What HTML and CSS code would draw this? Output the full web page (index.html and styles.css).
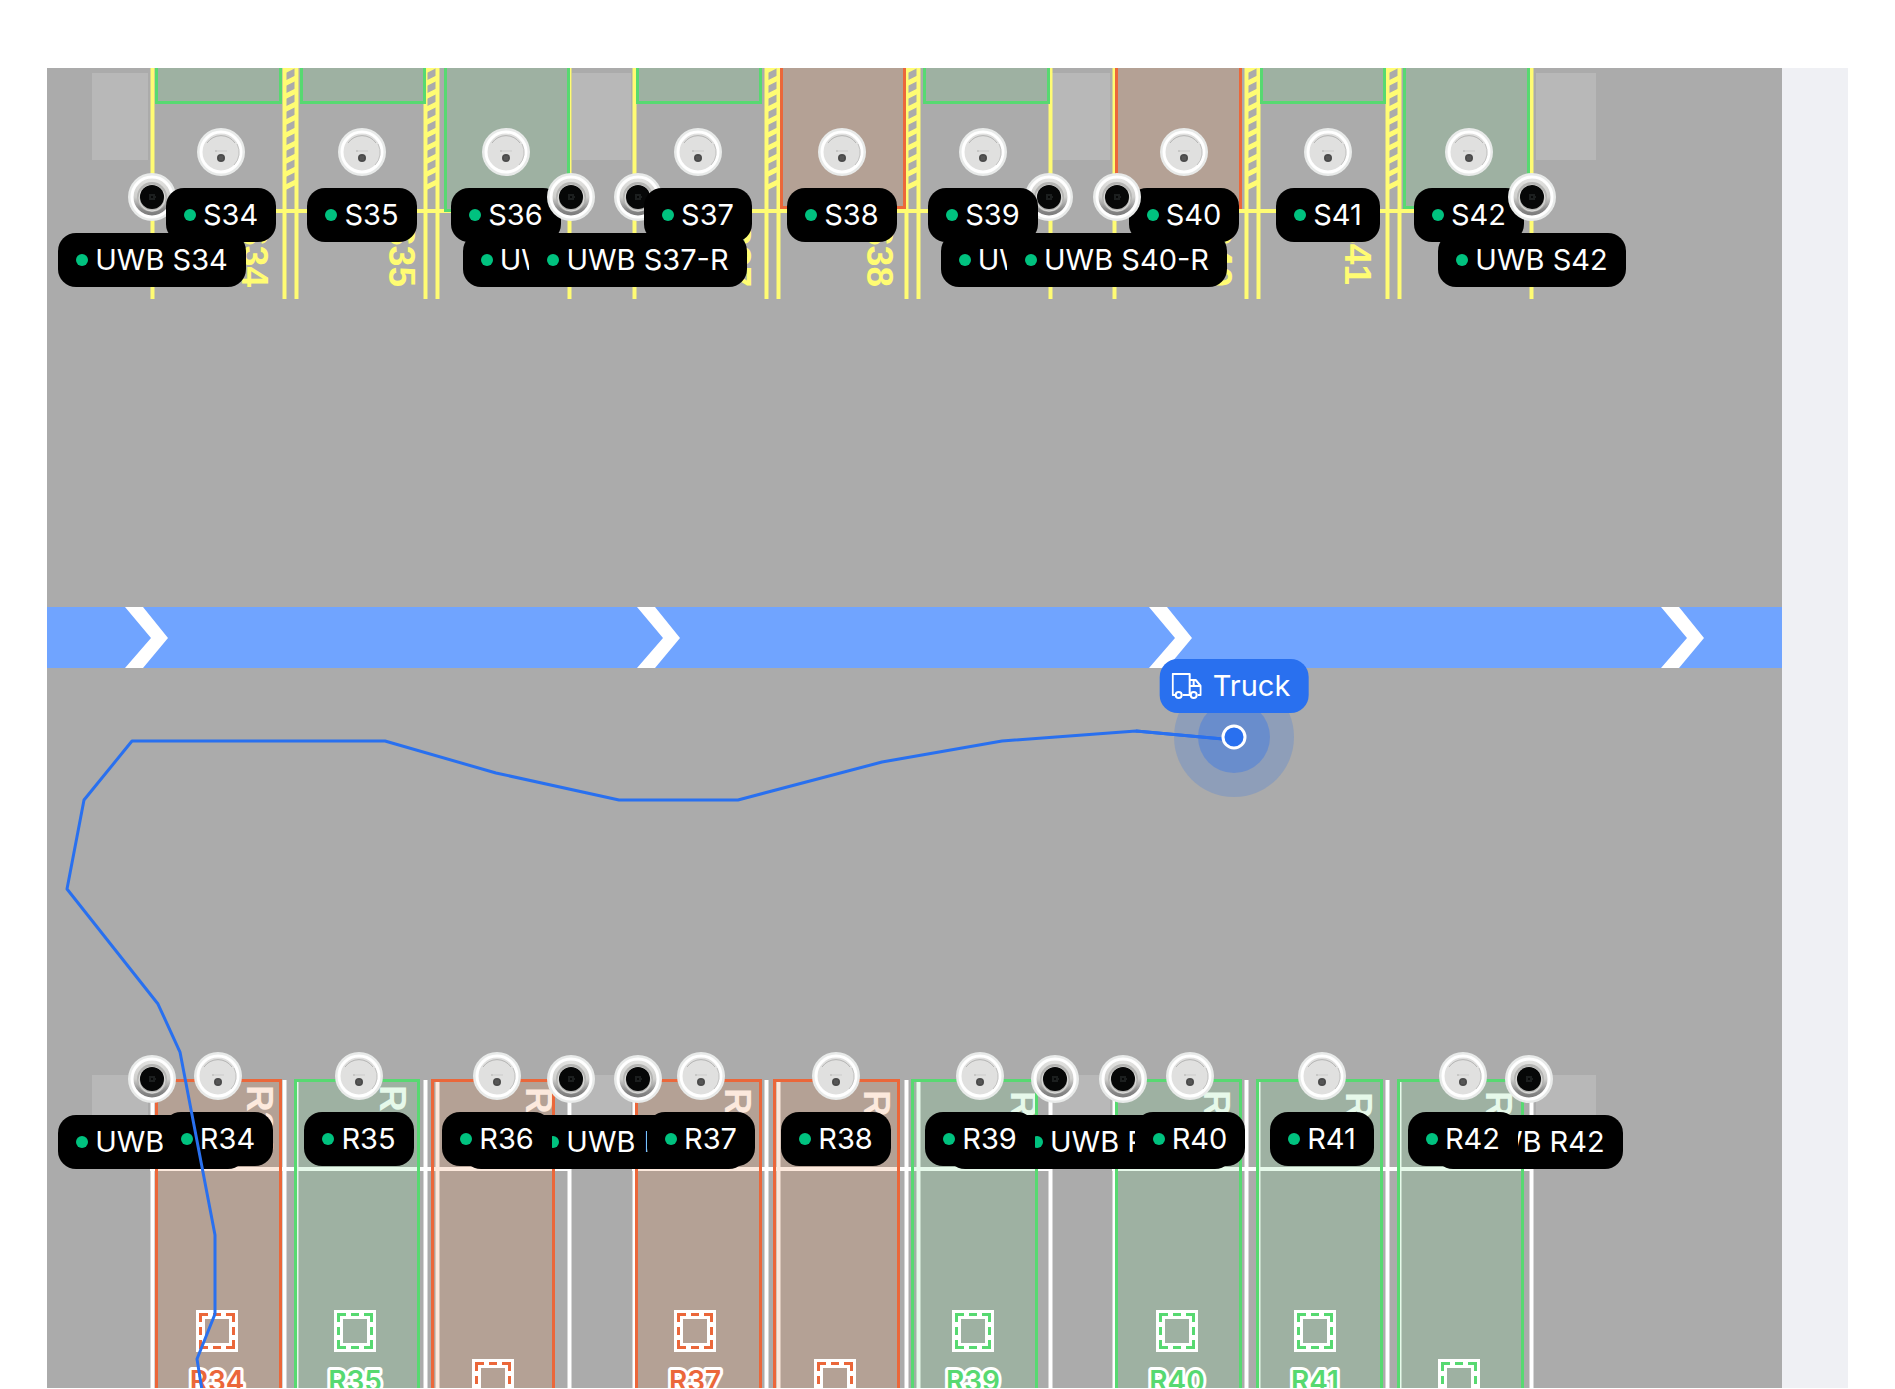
FILE: index.html
```html
<!DOCTYPE html>
<html lang="en">
<head>
    <meta charset="UTF-8">
    <meta name="viewport" content="width=device-width, initial-scale=1.0">
    <title>Yard Map</title>
    <link rel="stylesheet" href="styles.css">
</head>
<body>
    <!-- shared symbols -->
    <svg class="defs" aria-hidden="true">
        <symbol id="reader" viewBox="0 0 48 48">
            <circle cx="24" cy="24" r="24" fill="#e8eae9"/>
            <circle cx="24" cy="24" r="20" fill="#e0e0df" stroke="#fff" stroke-width="3"/>
            <path d="M10 15a17 17 0 0 1 28 0" fill="none" stroke="#b4b4b3" stroke-width="1"/>
            <path d="M40 16a18 18 0 0 1-3 21" fill="none" stroke="#c4c4c3" stroke-width="1"/>
            <path d="M18 23h12" stroke="#cbcbca" stroke-width="1"/>
            <circle cx="19" cy="23" r="1" fill="#c2c2c1"/>
            <circle cx="24" cy="30" r="4" fill="#4b4b4b"/>
            <path d="M22.500 29h1m1 0h1m-3 2h1m1 0h1" stroke="#777" stroke-width="1"/>
        </symbol>
        <linearGradient id="bezel" x1="0" y1="0" x2="0" y2="1">
            <stop offset="0" stop-color="#e4e4e2"/>
            <stop offset=".5" stop-color="#cfcfcd"/>
            <stop offset=".8" stop-color="#8a8a8a"/>
            <stop offset="1" stop-color="#777"/>
        </linearGradient>
        <symbol id="anchor" viewBox="0 0 48 48">
            <circle cx="24" cy="24" r="24" fill="#e8eae9"/>
            <circle cx="24" cy="24" r="20" fill="url(#bezel)" stroke="#fff" stroke-width="3"/>
            <circle cx="24" cy="24" r="15" fill="#b5b5b3"/>
            <circle cx="24" cy="25" r="13" fill="none" stroke="#dededc" stroke-width="1"/>
            <circle cx="24" cy="24" r="12" fill="#060707"/>
            <path d="M21 22h6m-6 2h2m2 0h3m-7 2h6" stroke="#333838" stroke-width="1"/>
        </symbol>
    </svg>

    <main class="map">
        <div class="floor">
            <svg class="plan" id="plan">
                <g id="planLayer" transform="translate(-47 -68)"></g>
            </svg>
            <div class="pins" id="pins"></div>
            <svg class="plan">
                <g transform="translate(-47 -68)">
                    <polyline class="track" points="202,1390 197,1359 215,1314 215,1235 180,1052 158,1004 67,889 84,800 132,741 385,741 496,773 619,800 738,800 882,762 1002,741 1136,731 1234,740"/>
                    <circle class="pulse-outer" cx="1234" cy="737" r="60"/>
                    <circle class="pulse-inner" cx="1234" cy="737" r="36"/>
                    <polyline class="track" points="1136,731 1234,740"/>
                    <circle class="position" cx="1234" cy="737" r="11"/>
                </g>
            </svg>
            <div class="truck" id="truck">
                <svg class="truck-icon" viewBox="0 0 30 26" aria-hidden="true">
                    <path d="M4 22H1V1h17v21h-7M18 7h6l5 6v9h-3M18 22h1M18 13h11M22 7v6"/>
                    <circle cx="7" cy="22" r="3"/>
                    <circle cx="22" cy="22" r="3"/>
                </svg>
                Truck
            </div>
        </div>
    </main>

    <script>
        // plan coordinates of the top left corner of the floor
        const ORIGIN = { x: 47, y: 68 };

        const laneLines = [152, 284, 296, 425, 437, 569, 634, 766, 778, 906, 918, 1050, 1114, 1246, 1258, 1387, 1399, 1531];
        const blocks = [[150, 571], [632, 1052], [1112, 1533]];
        const hatches = [284, 425, 766, 906, 1246, 1387];
        const pillars = [[92, 56], [572, 59], [1052, 58], [1536, 60]];

        // [name, left, right, bottom, state, painted text x, painted text end]
        const upperBays = [
            ["S34", 155, 282, 104, "free", 242, 287],
            ["S35", 300, 426, 104, "free", 389, 287],
            ["S36", 444, 570, 212, "free", 531, 287],
            ["S37", 636, 762, 104, "free", 725, 287],
            ["S38", 780, 906, 209, "busy", 867, 287],
            ["S39", 923, 1050, 104, "free", 1008, 287],
            ["S40", 1115, 1242, 209, "busy", 1206, 287],
            ["S41", 1260, 1386, 104, "free", 1345, 285],
            ["S42", 1403, 1530, 209, "free", 1490, 287]
        ];

        // [name, left, right, state, painted text x, painted text start, target x, target y]
        const lowerBays = [
            ["R34", 155, 282, "busy", 247, 1085, 217, 1331],
            ["R35", 294, 420, "free", 380, 1085, 355, 1331],
            ["R36", 431, 555, "busy", 526, 1087, 493, 1380],
            ["R37", 635, 762, "busy", 725, 1088, 695, 1331],
            ["R38", 773, 900, "busy", 864, 1090, 835, 1380],
            ["R39", 911, 1038, "free", 1011, 1091, 973, 1331],
            ["R40", 1115, 1242, "free", 1204, 1090, 1177, 1331],
            ["R41", 1256, 1383, "free", 1346, 1092, 1315, 1331],
            ["R42", 1397, 1524, "free", 1486, 1091, 1459, 1380]
        ];

        // later devices are drawn over earlier ones
        const devices = [
            ["anchor", "UWB S34", 152, 197],
            ["reader", "S34", 221, 152],
            ["reader", "S35", 362, 152],
            ["reader", "S36", 506, 152],
            ["anchor", "UWB S36-L", 571, 197],
            ["anchor", "UWB S37-R", 638, 197],
            ["reader", "S37", 698, 152],
            ["reader", "S38", 842, 152],
            ["anchor", "UWB S39-L", 1049, 197],
            ["reader", "S39", 983, 152],
            ["reader", "S40", 1184, 152],
            ["anchor", "UWB S40-R", 1117, 197],
            ["reader", "S41", 1328, 152],
            ["reader", "S42", 1469, 152],
            ["anchor", "UWB S42", 1532, 197],
            ["anchor", "UWB R34", 152, 1079],
            ["reader", "R34", 218, 1076],
            ["reader", "R35", 359, 1076],
            ["anchor", "UWB R36-L", 571, 1079],
            ["anchor", "UWB R37-R", 638, 1079],
            ["reader", "R36", 497, 1076],
            ["reader", "R37", 701, 1076],
            ["reader", "R38", 836, 1076],
            ["anchor", "UWB R39-L", 1055, 1079],
            ["anchor", "UWB R40-R", 1123, 1079],
            ["reader", "R39", 980, 1076],
            ["reader", "R40", 1190, 1076],
            ["reader", "R41", 1322, 1076],
            ["anchor", "UWB R42", 1529, 1079],
            ["reader", "R42", 1463, 1076]
        ];

        function bay(left, top, right, bottom, state) {
            return `<rect class="bay ${state}" x="${left + 1.5}" y="${top + 1.5}" width="${right - left - 3}" height="${bottom - top - 3}"/>`;
        }

        function drawPlan() {
            let out = "";

            pillars.forEach(([x, w]) => {
                out += `<rect class="pillar" x="${x}" y="73" width="${w}" height="87"/>`;
                out += `<rect class="pillar" x="${x}" y="1075" width="${w}" height="87"/>`;
            });

            // driving lane with direction arrows
            out += `<rect class="lane" x="0" y="607" width="6000" height="61"/>`;
            for (let x = 125; x < 6000; x += 512) {
                out += `<polygon class="arrow" points="${x},607 ${x + 18},607 ${x + 43},638 ${x + 18},668 ${x},668 ${x + 26},638"/>`;
            }

            // upper bays
            hatches.forEach(x => {
                for (let y = 187; y > 60; y -= 13) {
                    out += `<path class="paint-yellow hatch" d="M${x} ${y + 1}l12 -6"/>`;
                }
            });
            laneLines.forEach(x => {
                out += `<path class="paint-yellow" d="M${x + .5} 60V299"/>`;
                out += `<path class="paint-white" d="M${x + .5} 1080V1400"/>`;
            });
            blocks.forEach(([a, b]) => {
                out += `<path class="paint-yellow" d="M${a} 211H${b}"/>`;
                out += `<path class="paint-white" d="M${a} 1169H${b}"/>`;
            });
            upperBays.forEach(([name, l, r, b, state, tx, ty]) => {
                out += `<text class="painted yellow" text-anchor="end" transform="translate(${tx} ${ty}) rotate(90)">${name}</text>`;
                out += bay(l, 40, r, b, state);
            });

            // lower bays
            lowerBays.forEach(([name, l, r, state, tx, ty, cx, cy]) => {
                out += `<text class="painted" transform="translate(${tx} ${ty}) rotate(90)">${name}</text>`;
                out += bay(l, 1079, r, 1450, state);
                out += `<rect class="target-bg" x="${cx - 16.5}" y="${cy - 16.5}" width="33" height="33"/>`;
                out += `<rect class="target ${state}" x="${cx - 16.5}" y="${cy - 16.5}" width="33" height="33"/>`;
                out += `<text class="bay-name ${state}" x="${cx}" y="${cy + 60}">${name}</text>`;
            });

            document.getElementById("planLayer").innerHTML = out;
        }

        function place(el, x, y) {
            el.style.left = (x - ORIGIN.x) + "px";
            el.style.top = (y - ORIGIN.y) + "px";
        }

        function drawPins() {
            const pins = document.getElementById("pins");
            devices.forEach(([type, name, x, y]) => {
                const pin = document.createElement("div");
                pin.className = "pin";
                pin.innerHTML = `
                    <svg class="device" aria-hidden="true"><use href="#${type}"/></svg>
                    <div class="label"><span class="dot"></span>${name}</div>`;
                place(pin, x, y);
                pins.appendChild(pin);
            });
            place(document.getElementById("truck"), 1234, 713);
        }

        drawPlan();
        drawPins();
    </script>
</body>
</html>
```
FILE: styles.css
```css
* {
    box-sizing: border-box;
}
body {
    margin: 0;
    padding: 68px 47px 1px;
    height: 100vh;
    background: #fff;
    font-family: Inter, "Liberation Sans", sans-serif;
    overflow: hidden;
}
.defs {
    position: absolute;
    width: 0;
    height: 0;
}
.map {
    display: flex;
    height: 100%;
    padding-right: 66px;
    background: #eff0f4;
}
.floor {
    position: relative;
    flex: 1;
    overflow: hidden;
    background: #ababab;
}
.plan {
    position: absolute;
    top: 0;
    left: 0;
    width: 100%;
    height: 100%;
}

/* floor drawing */
.pillar {
    fill: #b8b8b8;
}
.lane {
    fill: #70a4ff;
}
.arrow {
    fill: #fff;
}
.paint-yellow {
    fill: none;
    stroke: #fffc73;
    stroke-width: 4;
}
.hatch {
    stroke-width: 5;
}
.paint-white {
    fill: none;
    stroke: #fff;
    stroke-width: 4;
}
.painted {
    fill: #fff;
    font-family: "Liberation Sans", Arial, sans-serif;
    font-size: 37px;
    font-weight: bold;
}
.painted.yellow {
    fill: #fffc73;
}
.bay {
    stroke-width: 3;
}
.bay.free {
    fill: rgba(87, 217, 113, 0.15);
    stroke: #57d971;
}
.bay.busy {
    fill: rgba(235, 105, 30, 0.15);
    stroke: #eb673a;
}
.target-bg {
    fill: none;
    stroke: #fff;
    stroke-width: 9;
}
.target {
    fill: none;
    stroke-width: 3;
    stroke-dasharray: 15 5 8 5;
    stroke-dashoffset: 7.5;
}
.target.free {
    stroke: #57d971;
}
.target.busy {
    stroke: #eb673a;
}
.bay-name {
    font-size: 28px;
    font-weight: 600;
    text-anchor: middle;
    stroke: #fff;
    stroke-width: 6;
    stroke-linejoin: round;
    paint-order: stroke;
}
.bay-name.free {
    fill: #57d971;
}
.bay-name.busy {
    fill: #eb673a;
}

/* devices */
.pin {
    position: absolute;
    width: 0;
    height: 0;
    display: flex;
    flex-direction: column;
    align-items: center;
}
.device {
    flex: none;
    width: 48px;
    height: 48px;
    margin-top: -24px;
}
.label {
    flex: none;
    display: flex;
    align-items: center;
    gap: 7px;
    height: 54px;
    margin-top: 12px;
    padding: 0 18px;
    border-radius: 18px;
    background: #000;
    color: #fff;
    font-size: 29px;
    line-height: 54px;
    white-space: nowrap;
}
.dot {
    width: 12px;
    height: 12px;
    border-radius: 50%;
    background: #00c27f;
}

/* tracked vehicle */
.track {
    fill: none;
    stroke: #2970ef;
    stroke-width: 3;
    stroke-linejoin: round;
}
.pulse-outer {
    fill: rgba(41, 112, 239, 0.22);
}
.pulse-inner {
    fill: rgba(41, 112, 239, 0.36);
}
.position {
    fill: #2970ef;
    stroke: #fff;
    stroke-width: 3;
}
.truck {
    position: absolute;
    transform: translate(-50%, -100%);
    display: flex;
    align-items: center;
    gap: 11px;
    height: 54px;
    padding: 0 18px 0 12px;
    border-radius: 18px;
    background: #2970ef;
    color: #fff;
    font-size: 29px;
    line-height: 54px;
}
.truck-icon {
    width: 30px;
    height: 26px;
    fill: none;
    stroke: #fff;
    stroke-width: 2;
    stroke-linejoin: round;
}
.truck-icon circle {
    fill: #2970ef;
}
```
